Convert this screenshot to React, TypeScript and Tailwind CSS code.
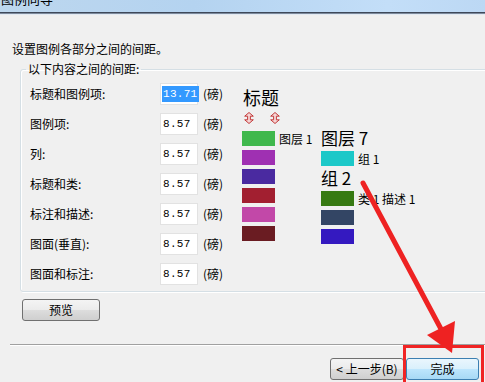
const cjk = "font-['Noto_Sans_CJK_SC','Noto_Sans',sans-serif]";

function DoubleArrow() {
  return (
    <svg width="10" height="12" viewBox="0 0 10 12" className="block">
      <path
        d="M5 0.5 L9.3 4.2 L6.4 4.2 L6.4 7.8 L9.3 7.8 L5 11.5 L0.7 7.8 L3.6 7.8 L3.6 4.2 L0.7 4.2 Z"
        fill="#f6d4d4"
        stroke="#c23a3a"
        strokeWidth="1"
        strokeLinejoin="round"
      />
    </svg>
  );
}

function Swatch({ color }: { color: string }) {
  return <div className="w-[33px] h-[15px] shrink-0" style={{ backgroundColor: color }} />;
}

const rows = [
  { label: "标题和图例项:", value: "13.71", selected: true },
  { label: "图例项:", value: "8.57" },
  { label: "列:", value: "8.57" },
  { label: "标题和类:", value: "8.57" },
  { label: "标注和描述:", value: "8.57" },
  { label: "图面(垂直):", value: "8.57" },
  { label: "图面和标注:", value: "8.57" },
];

const col1Colors = ["#3fb84c", "#9f30b2", "#4a2aa0", "#a21f30", "#c248a8", "#6a1c22"];

const btnGray =
  "h-[22px] rounded-[3px] border border-[#707070] bg-[linear-gradient(to_bottom,#f4f4f4_0%,#ebebeb_50%,#dddddd_50%,#cfcfcf_100%)] flex items-center justify-center text-[12px] text-black";

export default function App() {
  return (
    <div className={`relative w-[485px] h-[382px] overflow-hidden bg-[#f0f0f0] flex flex-col ${cjk}`}>
      {/* title bar */}
      <div className="h-[12px] overflow-hidden bg-[linear-gradient(to_right,#bdd7ee_0%,#b4d3f0_40%,#c3def8_80%,#bcd8f4_100%)]">
        <div className="mt-[-9px] pl-[1px] text-[13px] leading-[16px] text-black">图例向导</div>
      </div>
      <div className="h-px bg-[#3e4859]" />
      <div className="h-px bg-[#7d8a9c]" />
      <div className="h-px bg-[#e2eaf3]" />

      {/* content */}
      <div className="flex flex-col">
        <div className="mt-[26px] ml-[12px] text-[12px] leading-[16px] text-black">设置图例各部分之间的间距。</div>

        <fieldset className="mt-[5px] ml-[20px] w-[475px] rounded-[3px] border border-[#d5dfe5] shadow-[inset_1px_1px_0_#ffffff,1px_1px_0_#ffffff]">
          <legend className="ml-[5px] px-[2px] text-[12px] leading-[14px] text-black">以下内容之间的间距:</legend>
          <div className="flex pt-[7px] pb-[6px] pl-[9px]">
            {/* left rows */}
            <div className="w-[212px] flex flex-col gap-[8px]">
              {rows.map((r) => (
                <div key={r.label} className="h-[22px] flex items-center">
                  <div className="w-[130px] text-[12px] leading-[16px] text-black">{r.label}</div>
                  <div className="w-[38px] h-[22px] bg-white border border-[#e2e2e2] flex items-center pl-[1px]">
                    <span
                      className={`font-['Liberation_Mono',monospace] text-[11px] leading-[16px] px-[1px] tracking-[0.3px] ${
                        r.selected ? "bg-[#3399ff] text-white" : "text-black"
                      }`}
                    >
                      {r.value}
                    </span>
                  </div>
                  <div className="ml-[5px] text-[12px] leading-[16px] text-black">(磅)</div>
                </div>
              ))}
            </div>

            {/* preview */}
            <div className="flex flex-col">
              <div className="mt-[4px] ml-[1px] text-[18px] leading-[20px] text-black">标题</div>
              <div className="mt-[5px] ml-[2px] flex gap-[16px]">
                <DoubleArrow />
                <DoubleArrow />
              </div>
              <div className="mt-[4px] flex items-start">
                <div className="w-[79px] pt-[3px] flex flex-col gap-[4px]">
                  {col1Colors.map((c, i) => (
                    <div key={c} className="flex items-center">
                      <Swatch color={c} />
                      {i === 0 && (
                        <span className="ml-[4px] text-[12px] leading-[15px] text-black whitespace-nowrap">图层 1</span>
                      )}
                    </div>
                  ))}
                </div>
                <div className="flex flex-col">
                  <div className="text-[17px] leading-[20px] text-black whitespace-nowrap">图层 7</div>
                  <div className="mt-[3px] flex items-center">
                    <Swatch color="#1cc8c8" />
                    <span className="ml-[4px] text-[12px] leading-[15px] text-black whitespace-nowrap">组 1</span>
                  </div>
                  <div className="mt-[2px] text-[17px] leading-[20px] text-black whitespace-nowrap">组 2</div>
                  <div className="mt-[3px] flex flex-col gap-[4px]">
                    <div className="flex items-center">
                      <Swatch color="#377a12" />
                      <span className="ml-[4px] text-[12px] leading-[15px] text-black whitespace-nowrap">类 1 描述 1</span>
                    </div>
                    <Swatch color="#334564" />
                    <Swatch color="#3419c0" />
                  </div>
                </div>
              </div>
            </div>
          </div>
        </fieldset>

        <div className="mt-[7px] ml-[22px]">
          <div className={`${btnGray} w-[78px]`}>预览</div>
        </div>

        <div className="mt-[23px] ml-[10px] h-px bg-[#a0a0a0]" />
        <div className="ml-[10px] h-px bg-[#ffffff]" />

        <div className="mt-[12px] flex justify-end pr-[6px] gap-[2px]">
          <div className={`${btnGray} w-[74px]`}>&lt; 上一步(B)</div>
          <div className="w-[73px] h-[22px] rounded-[3px] border border-[#3c7fb1] bg-[linear-gradient(to_bottom,#eaf6fd_0%,#d9f0fc_50%,#bee6fd_50%,#a7d9f5_100%)] flex items-center justify-center text-[12px] text-black">
            完成
          </div>
        </div>
      </div>

      {/* red annotation overlay */}
      <div className="absolute left-[403px] top-[345px] w-[81px] h-[40px] border-[3px] border-[#f02424]" />
      <svg className="absolute left-0 top-0 pointer-events-none" width="485" height="382" viewBox="0 0 485 382">
        <line x1="363" y1="183" x2="441" y2="329" stroke="#ee2222" strokeWidth="5" strokeLinecap="round" />
        <polygon points="452,353 427,335 455,321" fill="#ee2222" />
      </svg>
    </div>
  );
}
